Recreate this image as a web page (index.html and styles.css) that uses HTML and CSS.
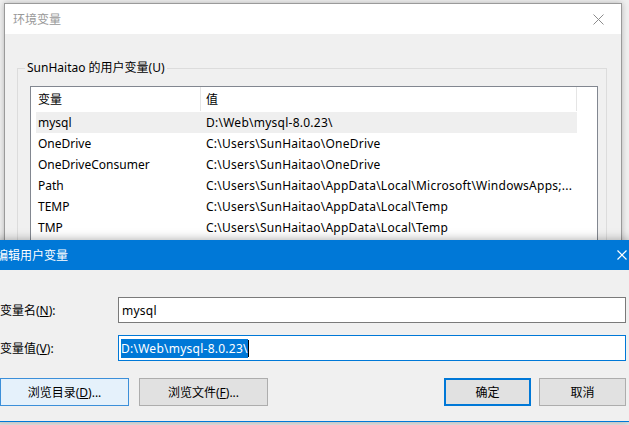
FILE: index.html
```html
<!DOCTYPE html>
<html>
<head>
    <title>环境变量</title>
    <link rel="stylesheet" href="styles.css">
</head>
<body>
    <!-- 环境变量 window (behind) -->
    <div class="env-window">
        <div class="titlebar">
            <span class="title">环境变量</span>
            <span class="close-btn">
                <svg width="11" height="11" viewBox="0 0 11 11"><path d="M0.5 0.5 L10.5 10.5 M10.5 0.5 L0.5 10.5" stroke="#8c8c8c" stroke-width="1" fill="none"/></svg>
            </span>
        </div>
        <div class="env-body">
            <div class="group">
                <span class="group-label">SunHaitao 的用户变量(U)</span>
                <div class="listview">
                    <div class="list-header">
                        <div class="hcell col-name">变量</div>
                        <div class="hcell col-value">值</div>
                    </div>
                    <div class="list-rows">
                        <div class="row hover"><span class="cell col-name">mysql</span><span class="cell col-value">D:\Web\mysql-8.0.23\</span></div>
                        <div class="row"><span class="cell col-name">OneDrive</span><span class="cell col-value">C:\Users\SunHaitao\OneDrive</span></div>
                        <div class="row"><span class="cell col-name">OneDriveConsumer</span><span class="cell col-value">C:\Users\SunHaitao\OneDrive</span></div>
                        <div class="row"><span class="cell col-name">Path</span><span class="cell col-value">C:\Users\SunHaitao\AppData\Local\Microsoft\WindowsApps;...</span></div>
                        <div class="row"><span class="cell col-name">TEMP</span><span class="cell col-value">C:\Users\SunHaitao\AppData\Local\Temp</span></div>
                        <div class="row"><span class="cell col-name">TMP</span><span class="cell col-value">C:\Users\SunHaitao\AppData\Local\Temp</span></div>
                    </div>
                </div>
            </div>
        </div>
    </div>

    <!-- 编辑用户变量 dialog (front) -->
    <div class="edit-window">
        <div class="edit-titlebar">
            <span class="edit-title">编辑用户变量</span>
            <span class="edit-close">
                <svg width="10" height="10" viewBox="0 0 10 10"><path d="M0.5 0.5 L9.5 9.5 M9.5 0.5 L0.5 9.5" stroke="#fff" stroke-width="1.2" fill="none"/></svg>
            </span>
        </div>
        <div class="edit-body">
            <div class="field">
                <label class="field-label">变量名(<u>N</u>):</label>
                <div class="textbox">mysql</div>
            </div>
            <div class="field">
                <label class="field-label">变量值(<u>V</u>):</label>
                <div class="textbox focused"><span class="selected">D:\Web\mysql-8.0.23\</span><span class="caret"></span></div>
            </div>
            <div class="buttons">
                <div class="btn-group">
                    <button class="btn wide hover">浏览目录(<u>D</u>)...</button>
                    <button class="btn wide">浏览文件(<u>F</u>)...</button>
                </div>
                <div class="btn-group">
                    <button class="btn default">确定</button>
                    <button class="btn">取消</button>
                </div>
            </div>
        </div>
    </div>
</body>
</html>
```

FILE: styles.css
```css
body {
    margin: 0;
    width: 629px;
    height: 425px;
    overflow: hidden;
    position: relative;
    background: #f0f0f0;
    font-family: "Noto Sans", "Noto Sans CJK SC", sans-serif;
    font-size: 12px;
    color: #000;
}

/* Environment variables window */
.env-window {
    position: absolute;
    left: 4px;
    top: 3px;
    width: 616px;
    height: 400px;
    border: 1px solid #9a9a9a;
    background: #f0f0f0;
    box-shadow: 0 0 6px rgba(0, 0, 0, 0.25);
}

.titlebar {
    height: 30px;
    background: #fff;
    display: flex;
    align-items: center;
    justify-content: space-between;
}

.title {
    padding-left: 8px;
    color: #999;
}

.close-btn {
    width: 46px;
    height: 30px;
    display: flex;
    align-items: center;
    justify-content: center;
}

.env-body {
    padding-top: 34px;
    padding-left: 12px;
}

.group {
    position: relative;
    width: 590px;
    height: 320px;
    border: 1px solid #dcdcdc;
    padding: 17px 10px 0 12px;
    box-sizing: border-box;
}

.group-label {
    position: absolute;
    left: 7px;
    top: -9px;
    padding: 0 2px;
    background: #f0f0f0;
    line-height: 16px;
}

.listview {
    width: 568px;
    height: 260px;
    border: 1px solid #828790;
    background: #fff;
    box-sizing: border-box;
}

.list-header {
    display: flex;
    height: 24px;
}

.hcell {
    display: flex;
    align-items: center;
    border-right: 1px solid #e5e5e5;
}

.hcell.col-name {
    width: 162px;
    padding-left: 7px;
}

.hcell.col-value {
    width: 370px;
    padding-left: 5px;
}

.list-rows {
    padding-top: 1px;
    padding-left: 5px;
}

.row {
    display: flex;
    height: 21px;
    align-items: center;
    width: 541px;
    white-space: nowrap;
}

.row.hover {
    background: #efefef;
}

.cell.col-name {
    width: 162px;
    padding-left: 2px;
}

.cell.col-value {
    padding-left: 6px;
    letter-spacing: 0.25px;
}

/* Edit user variable dialog */
.edit-window {
    position: absolute;
    left: -8px;
    top: 240px;
    width: 639px;
    box-shadow: 0 0 10px rgba(0, 0, 0, 0.35);
}

.edit-titlebar {
    height: 30px;
    background: #0078d7;
    color: #fff;
    display: flex;
    align-items: center;
    justify-content: space-between;
}

.edit-title {
    padding-left: 4px;
}

.edit-close {
    padding-right: 4px;
    display: flex;
}

.edit-body {
    background: #f0f0f0;
    border-bottom: 1px solid #0078d7;
    padding: 27px 5px 15px 8px;
    display: flex;
    flex-direction: column;
}

.field {
    display: flex;
    align-items: center;
    margin-bottom: 12px;
}

.field-label {
    width: 118px;
}

.textbox {
    width: 508px;
    height: 26px;
    box-sizing: border-box;
    border: 1px solid #7a7a7a;
    background: #fff;
    padding-left: 3px;
    display: flex;
    align-items: center;
    letter-spacing: 0.25px;
}

.textbox.focused {
    border-color: #0078d7;
    padding-left: 2px;
}

.selected {
    background: #0078d7;
    color: #fff;
    line-height: 19px;
}

.caret {
    width: 1px;
    height: 17px;
    background: #000;
}

.buttons {
    display: flex;
    justify-content: space-between;
    margin-top: 5px;
}

.btn-group {
    display: flex;
    gap: 8px;
}

.btn-group:first-child {
    gap: 10px;
}

.btn {
    width: 87px;
    height: 28px;
    border: 1px solid #adadad;
    background: #e1e1e1;
    font-family: inherit;
    font-size: 12px;
    color: #000;
    padding: 0;
}

.btn.wide {
    width: 129px;
}

.btn.hover {
    background: #e5f1fb;
    border-color: #3c8fd9;
}

.btn.default {
    border: 2px solid #0078d7;
}
```
